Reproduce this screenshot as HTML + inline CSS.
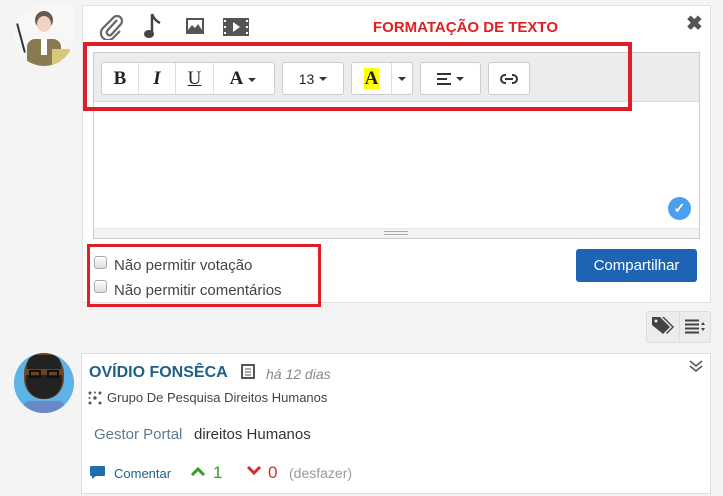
<!DOCTYPE html>
<html><head><meta charset="utf-8"><style>
*{box-sizing:border-box;margin:0;padding:0}
body{width:723px;height:496px;background:#f4f4f4;font-family:"Liberation Sans",sans-serif;position:relative;overflow:hidden}
.abs{position:absolute}
.card{position:absolute;left:82px;top:5px;width:629px;height:298px;background:#fff;border:1px solid #e2e2e2}
.btn{position:absolute;top:62px;height:33px;background:#fff;border:1px solid #ccc;border-radius:3px;font-family:"Liberation Serif",serif;font-size:19px;font-weight:bold;color:#222;display:flex;align-items:center;justify-content:center}
.caret{display:inline-block;border-left:4px solid transparent;border-right:4px solid transparent;border-top:4px solid #333;margin-left:5px;vertical-align:middle}
.cb{position:absolute;width:13px;height:13px;border:1px solid #aaa;border-radius:3px;background:linear-gradient(#fff,#ddd)}
.lbl{position:absolute;font-size:15px;color:#444}
</style></head><body>
<div class="abs" style="left:14px;top:5px;width:60px;height:61px;border-radius:50%;background:#f7f7f5;overflow:hidden;border-top-right-radius:6px">
 <div class="abs" style="left:21px;top:6px;width:18px;height:18px;border-radius:50%;background:#6b5a4e"></div>
 <div class="abs" style="left:23px;top:11px;width:14px;height:16px;border-radius:50%;background:#f1d2c4"></div>
 <div class="abs" style="left:13px;top:34px;width:34px;height:30px;background:#8a7a52;border-radius:8px 8px 0 0"></div>
 <div class="abs" style="left:27px;top:34px;width:6px;height:16px;background:#fff"></div>
 <div class="abs" style="left:38px;top:44px;width:18px;height:16px;background:#d8c87a"></div>
 <div class="abs" style="left:6px;top:18px;width:2px;height:30px;background:#333;transform:rotate(-15deg)"></div>
</div>
<div class="card"></div>
<svg class="abs" style="left:97px;top:12px" width="28" height="28" viewBox="0 0 28 28"><path d="M20 8 L10 19 a3 3 0 0 0 4 4 L24 12 a5 5 0 0 0 -7 -7 L6 16 a7 7 0 0 0 10 10 L23 19" fill="none" stroke="#666" stroke-width="2.2"/></svg>
<svg class="abs" style="left:143px;top:12px" width="20" height="28" viewBox="0 0 20 28"><path d="M9 2 v19" stroke="#444" stroke-width="2.5"/><ellipse cx="6" cy="22" rx="5" ry="4" fill="#444"/><path d="M9 2 q2 6 8 9" fill="none" stroke="#444" stroke-width="2.5"/></svg>
<svg class="abs" style="left:185px;top:17px" width="20" height="18" viewBox="0 0 20 18"><rect x="1" y="1" width="18" height="16" fill="#555"/><rect x="3" y="3" width="14" height="10" fill="#fff"/><path d="M3 13 l4-5 3 3 3-4 4 6z" fill="#555"/></svg>
<svg class="abs" style="left:223px;top:17px" width="26" height="20" viewBox="0 0 26 20"><rect x="0" y="1" width="26" height="18" fill="#555"/><g fill="#fff"><rect x="1" y="3" width="2" height="2"/><rect x="1" y="9" width="2" height="2"/><rect x="1" y="15" width="2" height="2"/><rect x="23" y="3" width="2" height="2"/><rect x="23" y="9" width="2" height="2"/><rect x="23" y="15" width="2" height="2"/><path d="M10 5 l7 5 -7 5z"/></g></svg>
<div class="abs" style="left:373px;top:19px;font-size:15px;font-weight:bold;color:#e02020">FORMATAÇÃO DE TEXTO</div>
<div class="abs" style="left:686px;top:11px;font-size:20px;font-weight:bold;color:#555">✖</div>
<div class="abs" style="left:93px;top:52px;width:607px;height:187px;border:1px solid #ccc;background:#fff"></div>
<div class="abs" style="left:94px;top:53px;width:605px;height:49px;background:#ececec;border-bottom:1px solid #ddd"></div>
<div class="abs" style="left:94px;top:228px;width:605px;height:10px;background:#f3f3f3;border-top:1px solid #e6e6e6"></div>
<div class="abs" style="left:384px;top:231px;width:24px;height:4px;border-top:1px solid #aaa;border-bottom:1px solid #aaa"></div>
<div class="abs" style="left:668px;top:197px;width:23px;height:23px;border-radius:50%;background:#4aa0ee;color:#fff;font-size:14px;text-align:center;line-height:23px;font-weight:bold">✓</div>
<div class="btn" style="left:101px;width:174px;justify-content:flex-start">
 <span style="width:37px;text-align:center;border-right:1px solid #ddd;line-height:31px">B</span><span style="width:37px;text-align:center;border-right:1px solid #ddd;line-height:31px;font-style:italic">I</span><span style="width:38px;text-align:center;border-right:1px solid #ddd;line-height:31px;text-decoration:underline;font-weight:normal">U</span><span style="width:58px;text-align:center;line-height:31px">A<span class="caret"></span></span>
</div>
<div class="btn" style="left:282px;width:62px;font-family:'Liberation Sans';font-weight:normal;font-size:14px">13<span class="caret"></span></div>
<div class="btn" style="left:351px;width:62px;justify-content:flex-start">
 <span style="width:40px;text-align:center;border-right:1px solid #ddd;line-height:31px"><span style="background:#ff0;padding:0 1px">A</span></span><span style="width:20px;text-align:center"><span class="caret" style="margin:0"></span></span>
</div>
<div class="btn" style="left:420px;width:61px"><svg width="14" height="12"><path d="M0 1h14M0 6h10M0 11h14" stroke="#333" stroke-width="2"/></svg><span class="caret"></span></div>
<div class="btn" style="left:488px;width:42px"><svg width="18" height="10"><rect x="1" y="1" width="16" height="8" rx="4" fill="none" stroke="#333" stroke-width="2"/><rect x="6" y="0" width="6" height="3" fill="#fff"/><rect x="6" y="7" width="6" height="3" fill="#fff"/><path d="M5 5h8" stroke="#333" stroke-width="2"/></svg></div>
<div class="abs" style="left:83px;top:42px;width:549px;height:69px;border:4px solid #e01e26"></div>
<div class="cb" style="left:94px;top:256px"></div>
<div class="lbl" style="left:114px;top:257px">Não permitir votação</div>
<div class="cb" style="left:94px;top:280px"></div>
<div class="lbl" style="left:114px;top:282px">Não permitir comentários</div>
<div class="abs" style="left:87px;top:244px;width:234px;height:63px;border:3px solid #e01e26"></div>
<div class="abs" style="left:576px;top:249px;width:121px;height:33px;background:#1e64b4;border-radius:3px;color:#fff;font-size:15px;text-align:center;line-height:33px">Compartilhar</div>
<div class="abs" style="left:646px;top:311px;width:65px;height:32px;background:#ececec;border:1px solid #ddd;border-radius:3px"></div>
<div class="abs" style="left:679px;top:312px;width:1px;height:30px;background:#ddd"></div>
<svg class="abs" style="left:651px;top:316px" width="24" height="20" viewBox="0 0 24 20"><path d="M1 1h8l10 10-7 7L1 9z" fill="#444"/><circle cx="5" cy="5" r="1.5" fill="#ececec"/><path d="M11 1h2l10 10-7 7-1-1 6-6z" fill="#444"/></svg>
<svg class="abs" style="left:685px;top:319px" width="22" height="15"><path d="M0 1.5h14M0 5.5h14M0 9.5h14M0 13.5h14" stroke="#444" stroke-width="2"/><path d="M16 6l2-3 2 3zM16 9l2 3 2-3z" fill="#444"/></svg>
<div class="abs" style="left:14px;top:353px;width:60px;height:60px;border-radius:50%;background:#5db3e6;overflow:hidden">
 <div class="abs" style="left:10px;top:0px;width:40px;height:46px;border-radius:45%;background:#6b4325"></div>
 <div class="abs" style="left:13px;top:2px;width:34px;height:14px;background:#222;border-radius:10px 10px 0 0"></div>
 <div class="abs" style="left:12px;top:22px;width:36px;height:24px;background:#222;border-radius:0 0 18px 18px"></div>
 <div class="abs" style="left:15px;top:17px;width:12px;height:8px;border:2px solid #111"></div>
 <div class="abs" style="left:33px;top:17px;width:12px;height:8px;border:2px solid #111"></div>
 <div class="abs" style="left:8px;top:48px;width:44px;height:14px;background:#6a87c7;border-radius:8px 8px 0 0"></div>
</div>
<div class="abs" style="left:81px;top:353px;width:630px;height:141px;background:#fff;border:1px solid #ddd"></div>
<div class="abs" style="left:89px;top:364px;font-size:16px;font-weight:bold;color:#1e5f8a">OVÍDIO FONSÊCA</div>
<svg class="abs" style="left:241px;top:364px" width="14" height="15"><rect x="1" y="1" width="12" height="13" fill="none" stroke="#555" stroke-width="2"/><path d="M4 5h6M4 8h6M4 11h6" stroke="#555"/></svg>
<div class="abs" style="left:266px;top:366px;font-size:14px;font-style:italic;color:#888">há 12 dias</div>
<svg class="abs" style="left:688px;top:359px" width="16" height="14"><path d="M2 2l6 5 6-5M2 7l6 5 6-5" fill="none" stroke="#555" stroke-width="1.5"/></svg>
<svg class="abs" style="left:88px;top:391px" width="14" height="14"><g fill="#555"><circle cx="7" cy="7" r="1.7"/><circle cx="2" cy="2" r="1.5"/><circle cx="12" cy="2" r="1.5"/><circle cx="2" cy="12" r="1.5"/><circle cx="12" cy="12" r="1.5"/><circle cx="7" cy="1.5" r="1"/><circle cx="1.5" cy="7" r="1"/></g></svg>
<div class="abs" style="left:107px;top:390px;font-size:13px;color:#444">Grupo De Pesquisa Direitos Humanos</div>
<div class="abs" style="left:94px;top:426px;font-size:15px;color:#5a7a90">Gestor Portal</div>
<div class="abs" style="left:194px;top:426px;font-size:15px;color:#333">direitos Humanos</div>
<svg class="abs" style="left:89px;top:465px" width="17" height="15"><path d="M2 1h13a1 1 0 0 1 1 1v8a1 1 0 0 1-1 1H7l-4 3v-3H2a1 1 0 0 1-1-1V2a1 1 0 0 1 1-1z" fill="#1e6fb0"/></svg>
<div class="abs" style="left:114px;top:466px;font-size:13px;color:#1e5f8a">Comentar</div>
<svg class="abs" style="left:190px;top:466px" width="16" height="10"><path d="M2 9l6-6 6 6" fill="none" stroke="#3a9a2a" stroke-width="3"/></svg>
<div class="abs" style="left:213px;top:463px;font-size:17px;color:#3a9a2a">1</div>
<svg class="abs" style="left:246px;top:466px" width="16" height="10"><path d="M2 1l6 6 6-6" fill="none" stroke="#d03030" stroke-width="3"/></svg>
<div class="abs" style="left:268px;top:463px;font-size:17px;color:#d03030">0</div>
<div class="abs" style="left:289px;top:465px;font-size:14px;color:#999">(desfazer)</div>
</body></html>
